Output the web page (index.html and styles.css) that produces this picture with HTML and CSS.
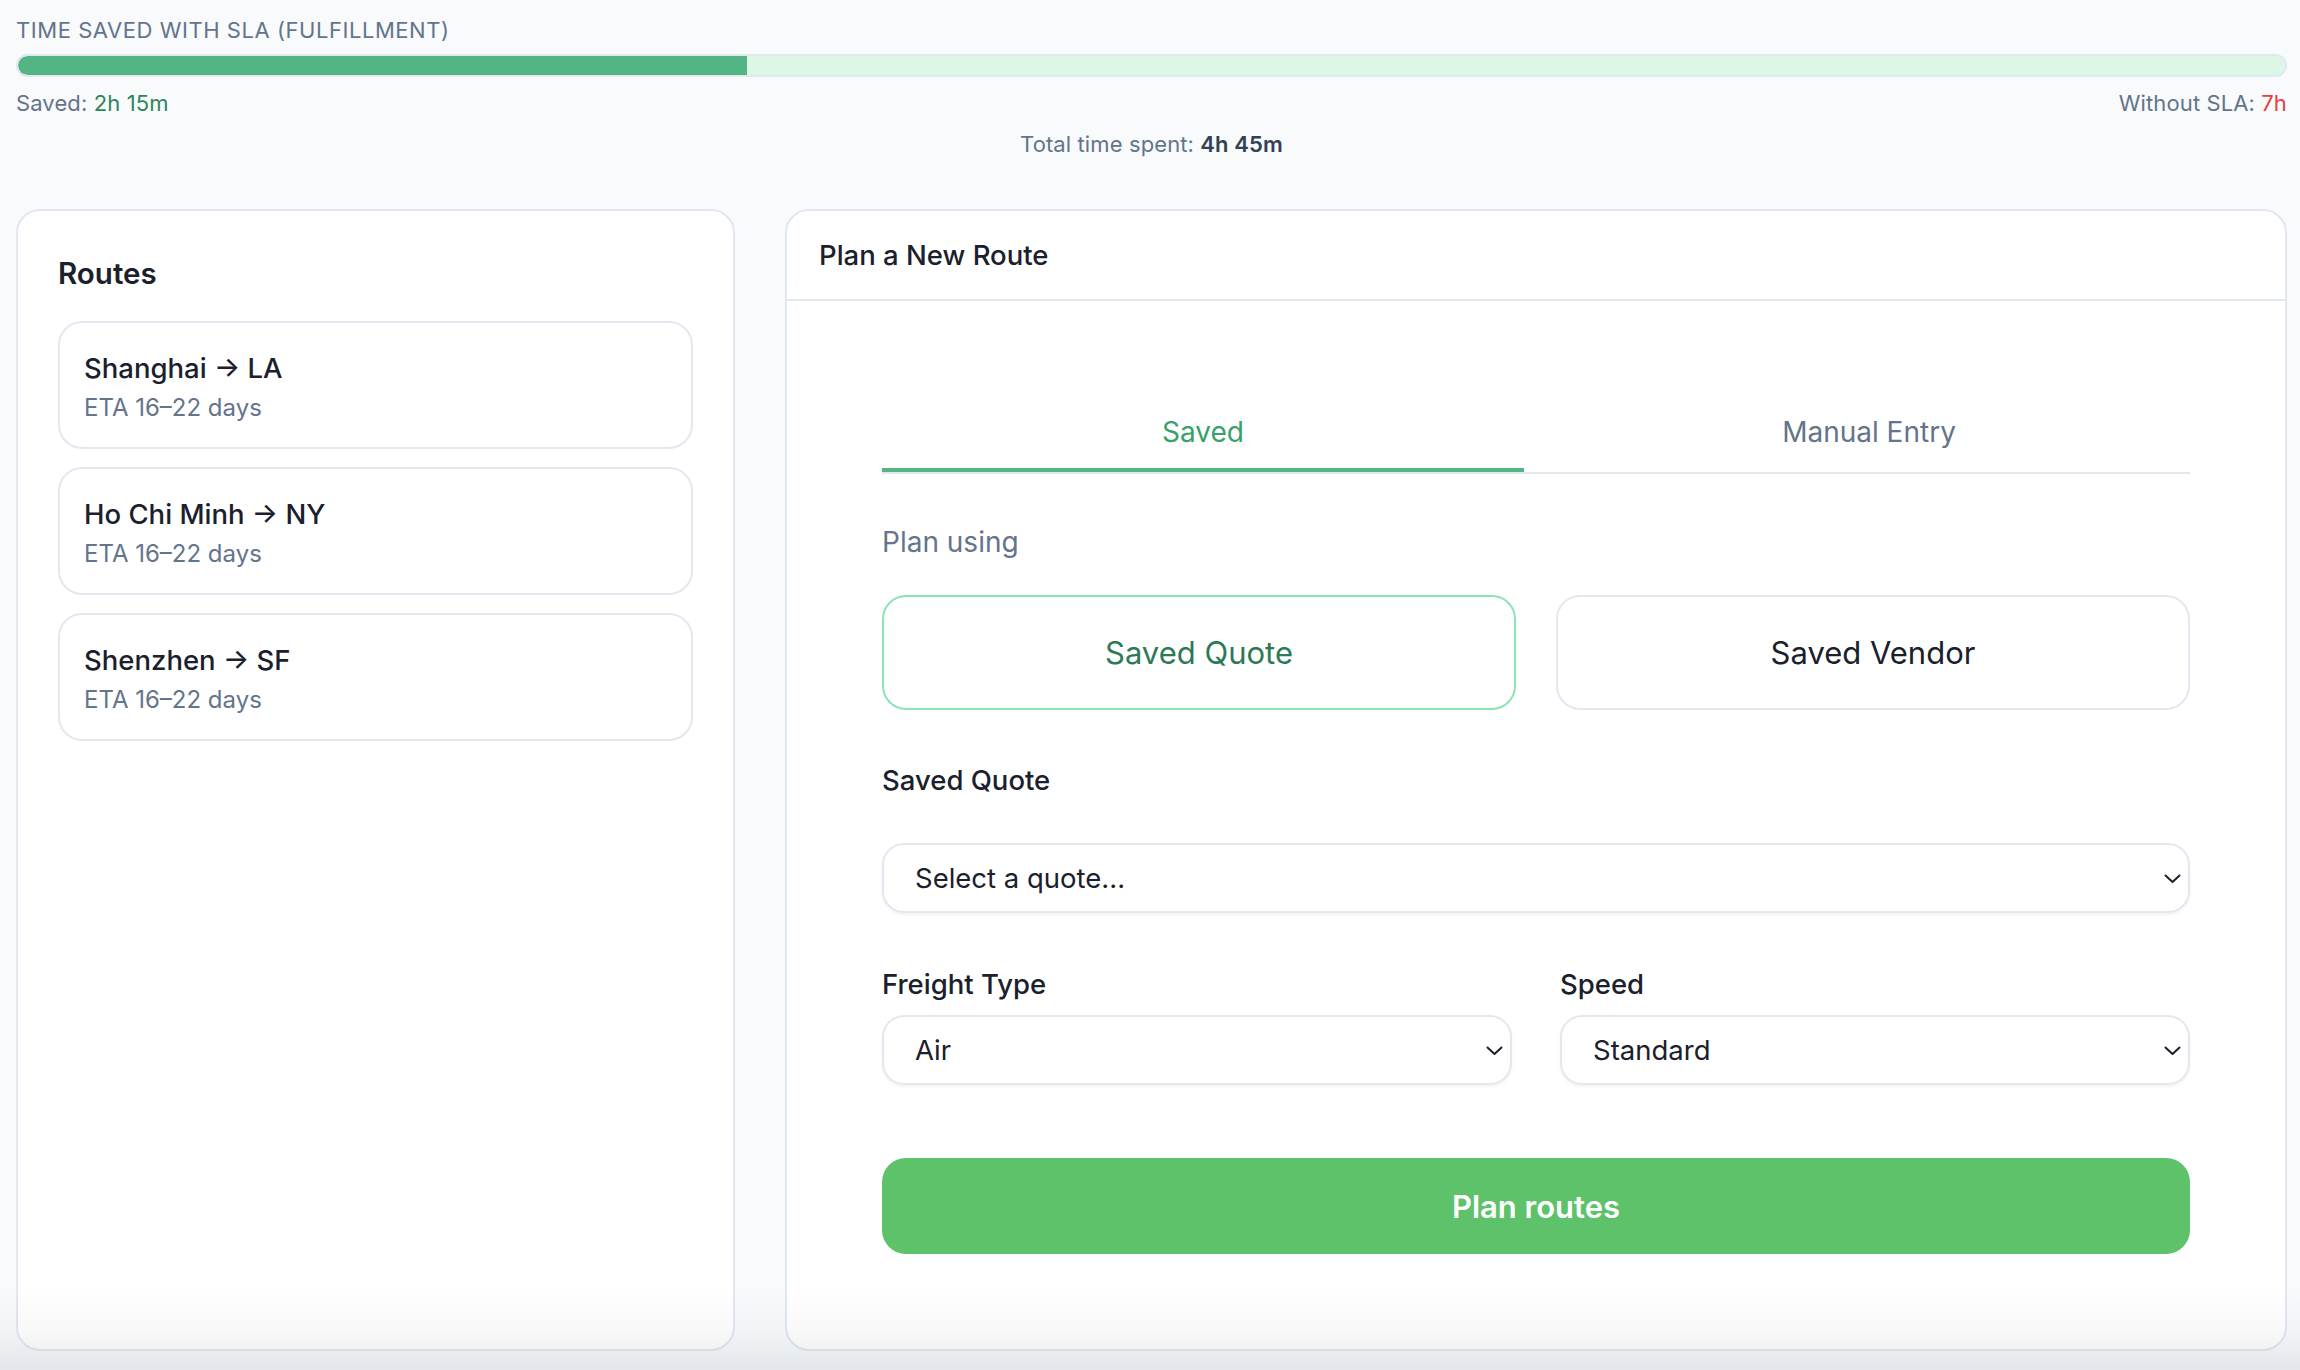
FILE: index.html
```html
<!DOCTYPE html>
<html lang="en">
<head>
<meta charset="utf-8">
<title>Plan a New Route</title>
<link rel="stylesheet" href="styles.css">
</head>
<body>
<div class="page">
  <section class="sla">
    <div class="sla-label">Time saved with SLA (Fulfillment)</div>
    <div class="bar"><div class="bar-fill" style="width:32.14%"></div></div>
    <div class="sla-row">
      <span>Saved: <span class="val-green">2h 15m</span></span>
      <span>Without SLA: <span class="val-red">7h</span></span>
    </div>
    <div class="total">Total time spent: <span class="val-dark">4h 45m</span></div>
  </section>

  <main class="grid">
    <aside class="card routes">
      <h2 class="routes-title">Routes</h2>
      <div class="route-list">
        <div class="route">
          <div class="route-title">Shanghai → LA</div>
          <div class="route-eta">ETA 16–22 days</div>
        </div>
        <div class="route">
          <div class="route-title">Ho Chi Minh → NY</div>
          <div class="route-eta">ETA 16–22 days</div>
        </div>
        <div class="route">
          <div class="route-title">Shenzhen → SF</div>
          <div class="route-eta">ETA 16–22 days</div>
        </div>
      </div>
    </aside>

    <section class="card plan">
      <header class="plan-head"><h2 class="plan-title">Plan a New Route</h2></header>
      <div class="plan-body">
        <div class="tabs">
          <div class="tab tab-active">Saved</div>
          <div class="tab">Manual Entry</div>
        </div>

        <div class="plan-label">Plan using</div>
        <div class="options">
          <button class="option option-active">Saved Quote</button>
          <button class="option">Saved Vendor</button>
        </div>

        <div class="field-label">Saved Quote</div>
        <div class="select-wrap select-first">
          <div class="select">Select a quote...</div>
          <svg class="chev" width="17" height="10" viewBox="0 0 17 10"><polyline points="1.5,1.5 8.5,8 15.5,1.5" fill="none" stroke="#1a202c" stroke-width="2" stroke-linecap="round" stroke-linejoin="round"/></svg>
        </div>

        <div class="row">
          <div class="col">
            <div class="field-label-sm">Freight Type</div>
            <div class="select-wrap">
              <div class="select">Air</div>
              <svg class="chev" width="17" height="10" viewBox="0 0 17 10"><polyline points="1.5,1.5 8.5,8 15.5,1.5" fill="none" stroke="#1a202c" stroke-width="2" stroke-linecap="round" stroke-linejoin="round"/></svg>
            </div>
          </div>
          <div class="col">
            <div class="field-label-sm">Speed</div>
            <div class="select-wrap">
              <div class="select">Standard</div>
              <svg class="chev" width="17" height="10" viewBox="0 0 17 10"><polyline points="1.5,1.5 8.5,8 15.5,1.5" fill="none" stroke="#1a202c" stroke-width="2" stroke-linecap="round" stroke-linejoin="round"/></svg>
            </div>
          </div>
        </div>

        <button class="primary">Plan routes</button>
      </div>
    </section>
  </main>
</div>
<div class="fade"></div>
</body>
</html>
```
FILE: styles.css
```css
* { box-sizing: border-box; }

html, body { margin: 0; }

body {
  background: #f8fafc;
  font-family: Inter, "Noto Sans", "Liberation Sans", sans-serif;
  color: #1a202c;
}

.page {
  min-height: 100vh;
  height: 100vh;
  padding: 16px 13px 19px 16px;
  display: flex;
  flex-direction: column;
}

/* SLA summary */
.sla-label {
  font-size: 22px;
  line-height: 28px;
  text-transform: uppercase;
  letter-spacing: 0.025em;
  color: #64748b;
}

.bar {
  margin-top: 10px;
  height: 23px;
  border: 2px solid #e2e8f0;
  border-radius: 999px;
  background: #dcf7e6;
  overflow: hidden;
}

.bar-fill {
  height: 100%;
  background: #54b584;
  border-radius: 999px 0 0 999px;
}

.sla-row {
  margin-top: 12px;
  display: flex;
  justify-content: space-between;
  font-size: 22px;
  line-height: 28px;
  letter-spacing: 0.005em;
  color: #64748b;
}

.val-green { color: #2f855a; }
.val-red { color: #e53e3e; }

.total {
  margin-top: 13px;
  text-align: center;
  font-size: 22px;
  line-height: 28px;
  letter-spacing: 0.005em;
  color: #64748b;
}

.val-dark { color: #334155; font-weight: 600; }

/* Main grid */
.grid {
  margin-top: 51px;
  flex: 1;
  display: grid;
  grid-template-columns: 719px 1fr;
  gap: 50px;
}

.card {
  background: #fff;
  border: 2px solid #e2e8f0;
  border-radius: 24px;
}

/* Routes */
.routes { padding: 40px; }

.routes-title {
  margin: 0 0 25px;
  font-size: 29.5px;
  line-height: 45px;
  font-weight: 600;
}

.route-list {
  display: flex;
  flex-direction: column;
  gap: 18px;
}

.route {
  border: 2px solid #e2e8f0;
  border-radius: 24px;
  padding: 25px 24px 21px;
}

.route-title {
  font-size: 27.5px;
  line-height: 40px;
  font-weight: 500;
}

.route-eta {
  margin-top: 2px;
  font-size: 24px;
  line-height: 36px;
  color: #64748b;
}

/* Plan card */
.plan-head {
  padding: 24px 32px 24px;
  border-bottom: 2px solid #e2e8f0;
}

.plan-title {
  margin: 0;
  font-size: 27.5px;
  line-height: 40px;
  font-weight: 500;
}

.plan-body { padding: 94px 95px 90px; }

.tabs {
  display: grid;
  grid-template-columns: 1fr 1fr;
  gap: 24px;
  border-bottom: 2px solid #e2e8f0;
}

.tab {
  padding: 17px 0 16px;
  text-align: center;
  font-size: 28px;
  line-height: 40px;
  color: #64748b;
  border-bottom: 4px solid transparent;
}

.tab-active {
  color: #38a169;
  border-bottom-color: #54b584;
}

.plan-label {
  margin-top: 48px;
  font-size: 28px;
  line-height: 40px;
  color: #64748b;
}

.options {
  margin-top: 33px;
  display: grid;
  grid-template-columns: 1fr 1fr;
  gap: 40px;
}

.option {
  height: 115px;
  border: 2px solid #e2e8f0;
  border-radius: 24px;
  background: #fff;
  font-family: inherit;
  font-size: 31px;
  color: #1a202c;
  display: flex;
  align-items: center;
  justify-content: center;
}

.option-active {
  border-color: #8ee3b5;
  color: #2d7a56;
}

.field-label {
  margin-top: 50px;
  font-size: 27.5px;
  line-height: 40px;
  font-weight: 500;
}

.select-wrap { position: relative; }

.select-first { margin-top: 43px; }

.select {
  height: 70px;
  border: 2px solid #e2e8f0;
  border-radius: 22px;
  background: #fff;
  padding: 0 40px 0 31px;
  display: flex;
  align-items: center;
  font-size: 27.5px;
  color: #1a202c;
  box-shadow: 0 2px 3px rgba(15, 23, 42, 0.05);
}

.chev {
  position: absolute;
  right: 9px;
  top: 31px;
}

.row {
  margin-top: 51px;
  display: grid;
  grid-template-columns: 1fr 1fr;
  gap: 48px;
}

.field-label-sm {
  font-size: 27.5px;
  line-height: 40px;
  font-weight: 500;
  margin-bottom: 11px;
}

.primary {
  margin-top: 73px;
  width: 100%;
  height: 96px;
  border: none;
  border-radius: 24px;
  background: #5ec26b;
  color: #fff;
  font-family: inherit;
  font-size: 31px;
  font-weight: 600;
}

.fade {
  position: fixed;
  left: 0;
  right: 0;
  bottom: 0;
  height: 80px;
  background: linear-gradient(rgba(30, 41, 59, 0), rgba(30, 41, 59, 0.035) 55%, rgba(30, 41, 59, 0.09));
  pointer-events: none;
}
```
